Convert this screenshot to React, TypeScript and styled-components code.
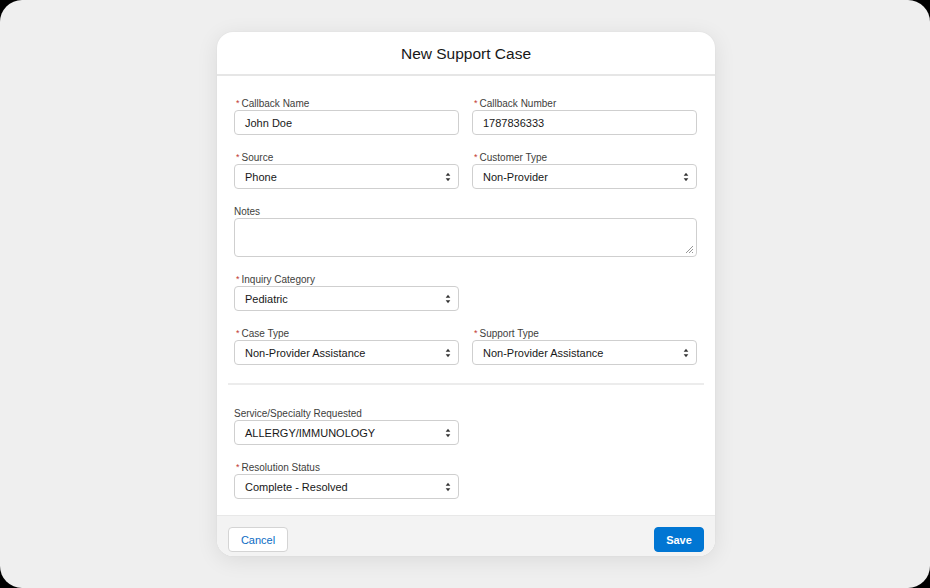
import React from "react";
import styled, { createGlobalStyle } from "styled-components";

const GlobalStyle = createGlobalStyle`
  html, body { margin: 0; padding: 0; background: #000; }
  body { font-family: "Liberation Sans", Arial, Helvetica, sans-serif; -webkit-font-smoothing: antialiased; }
  * { box-sizing: border-box; }
`;

const Screen = styled.div`
  width: 930px;
  height: 588px;
  background: #efefef;
  border-radius: 22px;
  display: flex;
  justify-content: center;
  align-items: flex-start;
  padding: 32px 0 0 2px;
  overflow: hidden;
`;

const Modal = styled.div`
  width: 498px;
  height: 524px;
  background: #fff;
  border-radius: 16px;
  box-shadow: 0 4px 22px rgba(0, 0, 0, 0.09), 0 0 2px rgba(0, 0, 0, 0.05);
  display: flex;
  flex-direction: column;
  overflow: hidden;
`;

const Header = styled.div`
  height: 45px;
  border-bottom: 2px solid #e6e6e6;
  display: flex;
  align-items: center;
  justify-content: center;
  padding-top: 2px;
`;

const Title = styled.h2`
  margin: 0;
  font-size: 15.5px;
  font-weight: 400;
  color: #181818;
`;

const Body = styled.div`
  flex: 1;
  padding: 21px 18px 16px 17px;
  display: flex;
  flex-direction: column;
`;

const Section = styled.div`
  display: flex;
  flex-direction: column;
  gap: 16px;
`;

const Row = styled.div`
  display: grid;
  grid-template-columns: 225px 225px;
  column-gap: 13px;
`;

const Field = styled.div<{ $full?: boolean }>`
  display: flex;
  flex-direction: column;
  grid-column: ${(p) => (p.$full ? "1 / span 2" : "auto")};
`;

const Label = styled.label`
  font-size: 10px;
  line-height: 13px;
  height: 13px;
  color: #3e3e3c;
  display: flex;
  align-items: baseline;
`;

const Req = styled.span`
  color: #c23934;
  font-size: 9px;
  margin-right: 2px;
  margin-left: 2px;
  position: relative;
  top: -1px;
`;

const Box = styled.div`
  height: 25px;
  border: 1px solid #cfcfcf;
  border-radius: 4px;
  background: #fff;
  display: flex;
  align-items: center;
  justify-content: space-between;
  padding: 0 7px 0 10px;
  font-size: 11px;
  color: #181818;
`;

const TextArea = styled.div`
  position: relative;
  height: 39px;
  border: 1px solid #cfcfcf;
  border-radius: 4px;
  background: #fff;
`;

const Grip = styled.svg`
  position: absolute;
  right: 2px;
  bottom: 2px;
`;

const Divider = styled.div`
  height: 2px;
  background: #ececec;
  margin: 18px -7px 22px -6px;
`;

const Footer = styled.div`
  height: 41px;
  background: #f3f3f3;
  border-top: 1px solid #e8e8e8;
  display: flex;
  justify-content: space-between;
  align-items: flex-start;
  padding: 11px 11px 0 11px;
`;

const Button = styled.button<{ $primary?: boolean }>`
  height: 25px;
  width: ${(p) => (p.$primary ? "50px" : "60px")};
  border-radius: 4px;
  border: 1px solid ${(p) => (p.$primary ? "#0176d3" : "#d4d4d4")};
  background: ${(p) => (p.$primary ? "#0176d3" : "#fff")};
  color: ${(p) => (p.$primary ? "#fff" : "#0b6bc4")};
  font-family: inherit;
  font-size: 11px;
  font-weight: ${(p) => (p.$primary ? 700 : 400)};
  padding: 0;
  cursor: pointer;
`;

const Arrows = () => (
  <svg width="6" height="10" viewBox="0 0 6 10">
    <path d="M3 0.8 L5.3 3.8 L0.7 3.8 Z" fill="#333" />
    <path d="M3 9.2 L5.3 6.2 L0.7 6.2 Z" fill="#333" />
  </svg>
);

const FieldLabel = ({ text, required }: { text: string; required?: boolean }) => (
  <Label>
    {required && <Req>*</Req>}
    {text}
  </Label>
);

const InputField = ({ label, value, required }: { label: string; value: string; required?: boolean }) => (
  <Field>
    <FieldLabel text={label} required={required} />
    <Box>{value}</Box>
  </Field>
);

const SelectField = ({ label, value, required }: { label: string; value: string; required?: boolean }) => (
  <Field>
    <FieldLabel text={label} required={required} />
    <Box>
      <span>{value}</span>
      <Arrows />
    </Box>
  </Field>
);

export default function App() {
  return (
    <>
      <GlobalStyle />
      <Screen>
        <Modal>
          <Header>
            <Title>New Support Case</Title>
          </Header>
          <Body>
            <Section>
              <Row>
                <InputField label="Callback Name" value="John Doe" required />
                <InputField label="Callback Number" value="1787836333" required />
              </Row>
              <Row>
                <SelectField label="Source" value="Phone" required />
                <SelectField label="Customer Type" value="Non-Provider" required />
              </Row>
              <Row>
                <Field $full>
                  <Label>Notes</Label>
                  <TextArea>
                    <Grip width="9" height="9" viewBox="0 0 9 9">
                      <path d="M8 1 L1 8 M8 4 L4 8 M8 7 L7 8" stroke="#8a8a8a" strokeWidth="0.9" />
                    </Grip>
                  </TextArea>
                </Field>
              </Row>
              <Row>
                <SelectField label="Inquiry Category" value="Pediatric" required />
              </Row>
              <Row>
                <SelectField label="Case Type" value="Non-Provider Assistance" required />
                <SelectField label="Support Type" value="Non-Provider Assistance" required />
              </Row>
            </Section>
            <Divider />
            <Section>
              <Row>
                <SelectField label="Service/Specialty Requested" value="ALLERGY/IMMUNOLOGY" />
              </Row>
              <Row>
                <SelectField label="Resolution Status" value="Complete - Resolved" required />
              </Row>
            </Section>
          </Body>
          <Footer>
            <Button>Cancel</Button>
            <Button $primary>Save</Button>
          </Footer>
        </Modal>
      </Screen>
    </>
  );
}
